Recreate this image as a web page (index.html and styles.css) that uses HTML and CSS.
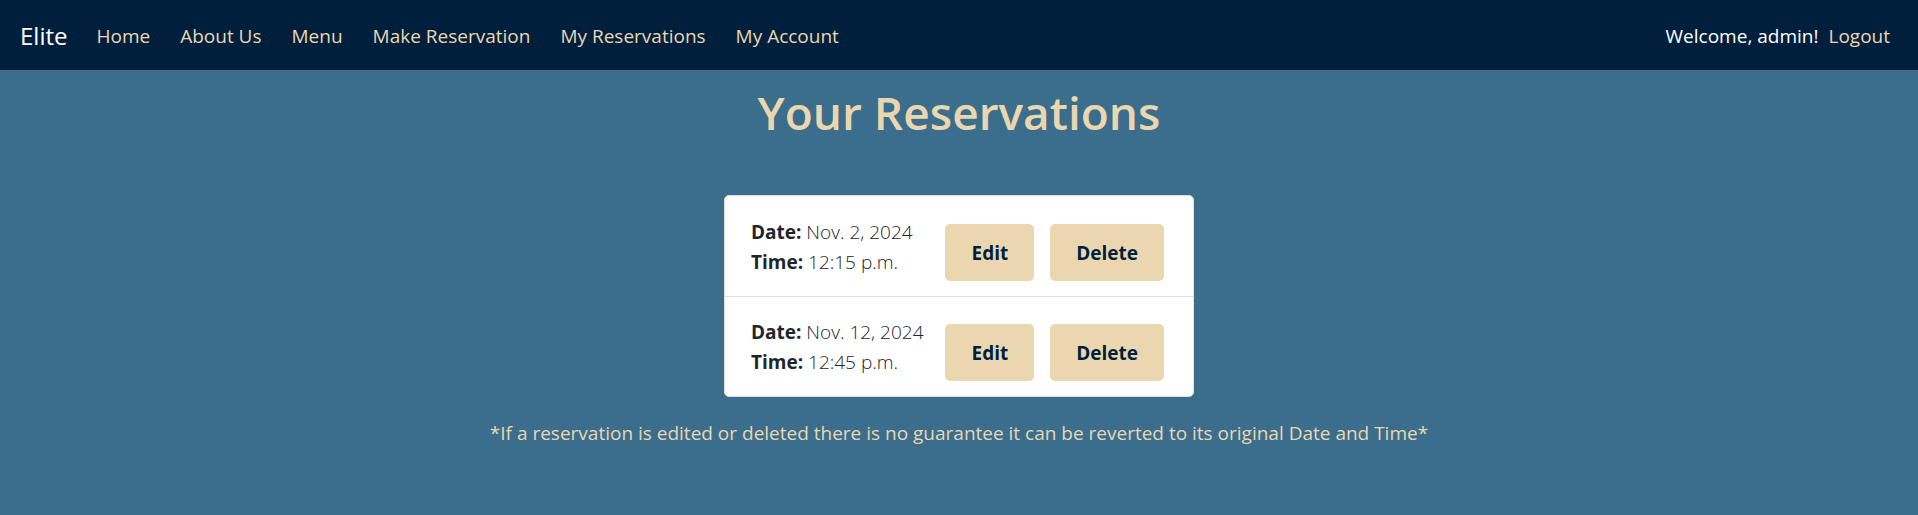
FILE: index.html
```html
<!DOCTYPE html>
<html lang="en">
<head>
<meta charset="utf-8">
<meta name="viewport" content="width=device-width, initial-scale=1">
<title>Elite - Your Reservations</title>
<link rel="stylesheet" href="styles.css">
</head>
<body>
<header class="navbar">
  <a class="brand" href="#">Elite</a>
  <nav class="nav-links">
    <a href="#">Home</a>
    <a href="#">About Us</a>
    <a href="#">Menu</a>
    <a href="#">Make Reservation</a>
    <a href="#">My Reservations</a>
    <a href="#">My Account</a>
  </nav>
  <div class="account">
    <span>Welcome, admin!</span>
    <a href="#">Logout</a>
  </div>
</header>
<main class="page">
  <h1 class="title">Your Reservations</h1>
  <ul class="reservations">
    <li class="reservation">
      <div class="details">
        <div><strong>Date:</strong> Nov. 2, 2024</div>
        <div><strong>Time:</strong> 12:15 p.m.</div>
      </div>
      <div class="actions">
        <button class="btn" type="button">Edit</button>
        <button class="btn" type="button">Delete</button>
      </div>
    </li>
    <li class="reservation">
      <div class="details">
        <div><strong>Date:</strong> Nov. 12, 2024</div>
        <div><strong>Time:</strong> 12:45 p.m.</div>
      </div>
      <div class="actions">
        <button class="btn" type="button">Edit</button>
        <button class="btn" type="button">Delete</button>
      </div>
    </li>
  </ul>
  <p class="note">*If a reservation is edited or deleted there is no guarantee it can be reverted to its original Date and Time*</p>
</main>
</body>
</html>
```
FILE: styles.css
```css
* {
  box-sizing: border-box;
}

body {
  margin: 0;
  background: #3b6d8c;
  color: #212529;
  font-family: "Segoe UI", "Open Sans", "Noto Sans", sans-serif;
  font-size: 19px;
  line-height: 30px;
}

.navbar {
  display: flex;
  align-items: center;
  gap: 29px;
  padding: 21px 28px 19px 20px;
  background: #001f3d;
  color: #fff;
}

.navbar a {
  color: #ead7b0;
  text-decoration: none;
}

.navbar .brand {
  color: #fff;
  font-size: 24px;
}

.nav-links {
  display: flex;
  gap: 30px;
}

.account {
  display: flex;
  gap: 10px;
  margin-left: auto;
}

.page {
  display: flex;
  flex-direction: column;
  align-items: center;
}

.title {
  margin: 12px 0 53px;
  color: #ead7b0;
  font-size: 46px;
  font-weight: 600;
  line-height: 60px;
}

.reservations {
  width: 470px;
  max-width: 100%;
  margin: 0;
  padding: 0;
  list-style: none;
  background: #fff;
  border: 1px solid #dfdfdf;
  border-radius: 5px;
}

.reservation {
  display: flex;
  justify-content: space-between;
  padding: 20px 29px 15px 26px;
}

.reservation + .reservation {
  padding-top: 19px;
  border-top: 1px solid #dfdfdf;
}

.details {
  padding-top: 1px;
  font-weight: 300;
}

.details strong {
  font-weight: 700;
}

.actions {
  display: flex;
  gap: 16px;
  padding-top: 8px;
}

.btn {
  padding: 14px 26px 13px;
  border: 0;
  border-radius: 5px;
  background: #ead7b0;
  color: #001f3d;
  font: inherit;
  font-weight: 700;
}

.note {
  margin: 21px 0 0;
  color: #ead7b0;
  text-align: center;
}
```
